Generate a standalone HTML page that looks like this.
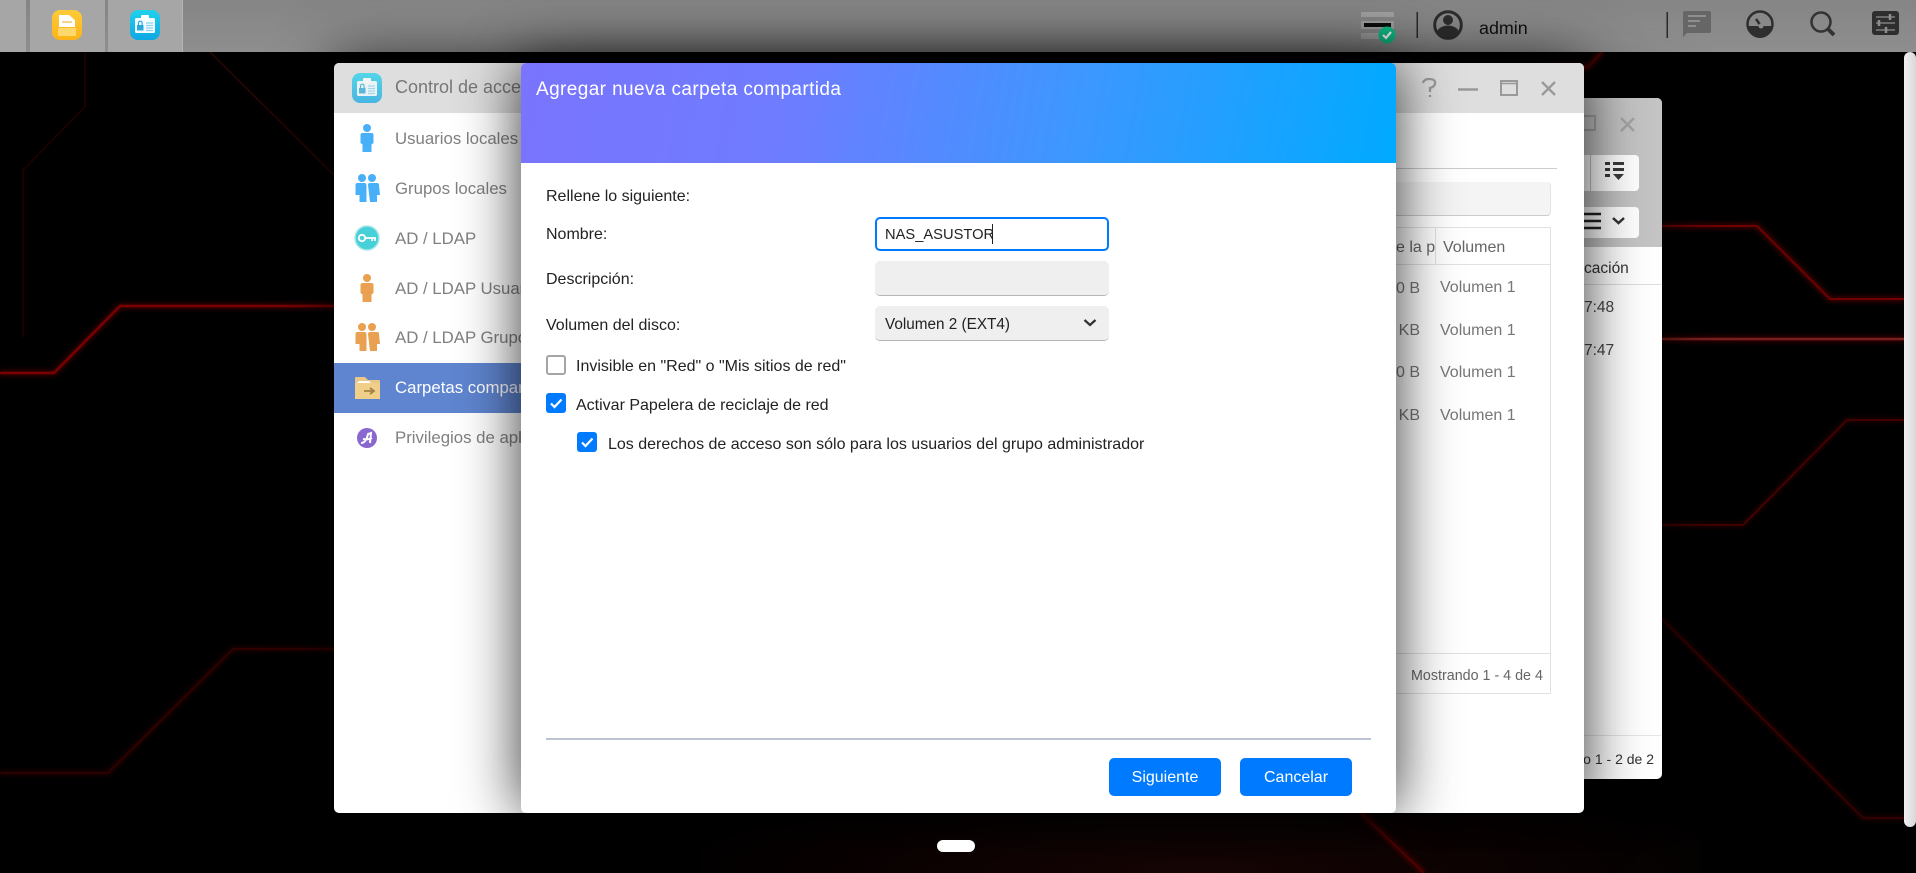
<!DOCTYPE html>
<html><head><meta charset="utf-8"><title>Agregar nueva carpeta compartida</title>
<style>
html,body{margin:0;padding:0;background:#000;width:1916px;height:873px;overflow:hidden}
body{position:relative;font-family:"Liberation Sans",sans-serif;font-size:16px;color:#222}
.a{position:absolute}
.t{position:absolute;white-space:nowrap;line-height:20px;margin-top:-10px}
.s{color:#808080;font-size:16.8px;left:395px}
.win{position:absolute;background:#fff;box-shadow:0 0 60px rgba(0,0,0,.8);overflow:hidden}
.chk{position:absolute;width:20px;height:20px;background:#007bff;border-radius:3px}
.btn{position:absolute;top:758px;height:38px;width:112px;background:#007bff;border-radius:5px;color:#fff;text-align:center;line-height:40px;font-size:16px}
.field{position:absolute;left:875px;width:234px;height:35px;background:#efefef;border-radius:5px;box-sizing:border-box;border-bottom:1px solid #b5b5b5}
.row{font-size:16px;color:#777}
</style></head><body>
<svg class="a" style="left:0;top:0" width="1916" height="873" viewBox="0 0 1916 873">
<defs>
<filter id="g" x="-20%" y="-20%" width="140%" height="140%"><feGaussianBlur stdDeviation="2.500"/></filter>
<radialGradient id="rg" cx="50%" cy="100%" r="60%"><stop offset="0" stop-color="#180606"/><stop offset="1" stop-color="#000"/></radialGradient>
<linearGradient id="acl" x1="0" y1="0" x2="0" y2="1"><stop offset="0" stop-color="#20d2ec"/><stop offset="1" stop-color="#0fa6e4"/></linearGradient>
<g id="aclicon"><rect x="0" y="0" width="30" height="30" rx="8" fill="url(#acl)"/><rect x="5" y="8" width="20" height="15" rx="1.5" fill="#fff" opacity=".95"/><rect x="11" y="5" width="8" height="5" rx="1" fill="#fff"/><rect x="7" y="15" width="6.5" height="5.5" fill="#2aa8dc"/><path d="M8.500 15v-2a1.800 1.800 0 0 1 3.600 0v2" fill="none" stroke="#2aa8dc" stroke-width="1.200"/><path d="M16 13h7M16 15.500h7M16 18h7M16 20.500h7" stroke="#8fd3ee" stroke-width="1.300"/></g>
</defs>
<rect x="700" y="700" width="1000" height="173" fill="url(#rg)"/>
<g fill="none" stroke-linejoin="miter">
<g stroke="#7a0000" stroke-width="6" filter="url(#g)" opacity=".45">
<path d="M0 373H54L120 306H340"/><path d="M1662 226H1757L1830 299H1904"/><path d="M1541 67H1588L1602 52"/><path d="M1662 339H1904"/><path d="M1361 813L1424 873"/>
</g>
<g stroke="#5a0000" stroke-width="5" filter="url(#g)" opacity=".35">
<path d="M0 773H108L233 649H340"/><path d="M1662 525H1743L1847 420H1904"/><path d="M1662 619L1863 818H1904"/>
</g>
<path d="M0 373H54L120 306H340" stroke="#7a0000" stroke-width="2.500"/>
<path d="M1662 226H1757L1830 299H1904" stroke="#700000" stroke-width="2"/>
<path d="M1541 67H1588L1602 52" stroke="#500000" stroke-width="1.500"/>
<path d="M1662 339H1904" stroke="#782020" stroke-width="2.500"/>
<path d="M1662 525H1743L1847 420H1904" stroke="#500000" stroke-width="1.500"/>
<path d="M1662 619L1863 818H1904" stroke="#3c0000" stroke-width="1.500"/>
<path d="M0 773H108L233 649H340" stroke="#360000" stroke-width="1.500"/>
<path d="M1361 813L1424 873" stroke="#600000" stroke-width="1.500"/>
<path d="M85 52V107L23 170V337" stroke="#220000" stroke-width="1.500"/>
<path d="M210 52L334 175" stroke="#2c0600" stroke-width="1.500"/>
</g>
</svg>

<!-- Top bar -->
<div class="a" style="left:0;top:0;width:1916px;height:52px;background:linear-gradient(#858585,#8e8e8e)"></div>
<div class="a" style="left:0;top:0;width:26px;height:52px;background:#a6a6a6"></div>
<div class="a" style="left:30px;top:0;width:75px;height:52px;background:#a6a6a6"></div>
<div class="a" style="left:107.500px;top:0;width:74.500px;height:52px;background:#a6a6a6;border-right:1px solid #b4b4b4"></div>
<svg class="a" style="left:0;top:0" width="1916" height="52" viewBox="0 0 1916 52">
<defs><linearGradient id="fs" x1="0" y1="0" x2="0" y2="1"><stop offset="0" stop-color="#ffcb3a"/><stop offset="1" stop-color="#fbb416"/></linearGradient></defs>
<rect x="52" y="10" width="30" height="30" rx="8" fill="url(#fs)"/>
<path d="M59 15h10l6 5v7H59z" fill="#fff"/><path d="M62 22h10" stroke="#f3c766" stroke-width="1.500"/>
<rect x="58" y="28" width="18" height="8" fill="#ffd86c"/>
<use href="#aclicon" x="130" y="10"/>
<!-- storage -->
<rect x="1361" y="12" width="33" height="5" fill="#a3a3a3"/><rect x="1361" y="21" width="33" height="8" fill="#a3a3a3"/><rect x="1364" y="23" width="27" height="4" fill="#0d0d0d"/><rect x="1361" y="33" width="33" height="6" fill="#a3a3a3"/>
<circle cx="1387" cy="35" r="8.500" fill="#10c08a"/><path d="M1383 35l3 3 5-6" fill="none" stroke="#fff" stroke-width="2.200"/>
<rect x="1416.500" y="12" width="1.500" height="26" fill="#2a2a2a"/>
<!-- avatar -->
<circle cx="1448" cy="25" r="13.300" fill="#8a8a8a" stroke="#2e2e2e" stroke-width="3"/><circle cx="1448" cy="20" r="5" fill="#2e2e2e"/><path d="M1437 33a11 7.500 0 0 1 22 0a13 13 0 0 1-22 0z" fill="#2e2e2e"/>
<rect x="1666.500" y="12" width="1.500" height="26" fill="#2a2a2a"/>
<!-- chat -->
<path d="M1685 11h24a2 2 0 0 1 2 2v18a2 2 0 0 1-2 2h-22l-4 4V13a2 2 0 0 1 2-2z" fill="#666"/><path d="M1688 16h18M1688 21h12M1688 26h8" stroke="#8f8f8f" stroke-width="2"/>
<!-- gauge -->
<circle cx="1760" cy="24" r="12.500" fill="none" stroke="#2e2e2e" stroke-width="2.500"/><path d="M1748 26h24a12 12 0 0 1-24 0z" fill="#2e2e2e"/><path d="M1756 19l5 7" stroke="#2e2e2e" stroke-width="2.500"/><circle cx="1761" cy="26" r="2.500" fill="#8a8a8a"/>
<!-- search -->
<circle cx="1821" cy="22" r="9.500" fill="none" stroke="#333" stroke-width="2.500"/><path d="M1828 29l6 6" stroke="#333" stroke-width="4"/>
<!-- settings -->
<rect x="1872" y="11" width="27" height="24" rx="3" fill="#2e2e2e"/><path d="M1876 17h19M1876 23h19M1876 30h19" stroke="#8f8f8f" stroke-width="1.300"/><path d="M1890 14v6M1879 20v6M1886 27v6" stroke="#8f8f8f" stroke-width="2.500"/>
</svg>
<div class="t" style="left:1479px;top:28px;font-size:17.900px;color:#111">admin</div>

<!-- Back window -->
<div class="win" style="left:1400px;top:98px;width:261.500px;height:680.500px;border-radius:5px">
<div class="a" style="left:0;top:0;right:0;height:149px;background:#c4c4c4"></div>
</div>
<div class="a" style="left:1584px;top:155px;width:55px;height:36px;background:#fff;border-radius:0 4px 4px 0"></div>
<div class="a" style="left:1590px;top:155px;width:1px;height:36px;background:#c4c4c4"></div>
<div class="a" style="left:1584px;top:207px;width:55px;height:31px;background:#fff;border-radius:0 4px 4px 0"></div>
<svg class="a" style="left:1584px;top:98px" width="78" height="150" viewBox="0 0 78 150">
<rect x="-6" y="18" width="17" height="14" fill="none" stroke="#a3a3a3" stroke-width="2"/>
<path d="M37 20l13 13M50 20L37 33" stroke="#a3a3a3" stroke-width="2.500"/>
<path d="M21 64h5v3h-5zM29 64h11v3H29zM21 70h5v3h-5zM29 70h11v3H29zM21 76h5v3h-5z" fill="#3a3a3a"/><path d="M29 76h11l-5.500 6z" fill="#3a3a3a"/>
<path d="M0 116h17M0 123h17M0 130h17" stroke="#222" stroke-width="2.500"/>
<path d="M29 120l5.500 5 5.500-5" fill="none" stroke="#333" stroke-width="2.500"/>
</svg>
<div class="t" style="left:1584px;top:269px;font-size:15.500px;color:#333">cación</div>
<div class="a" style="left:1584px;top:284px;width:77px;height:1px;background:#ddd"></div>
<div class="t" style="left:1584px;top:308px;font-size:15.500px;color:#444">7:48</div>
<div class="t" style="left:1584px;top:351px;font-size:15.500px;color:#444">7:47</div>
<div class="a" style="left:1584px;top:735px;width:77px;height:1px;background:#e6e6e6"></div>
<div class="t" style="left:1584px;width:70px;text-align:right;top:759px;font-size:14px;color:#333;direction:rtl"><span style="direction:ltr;unicode-bidi:embed">o 1 - 2 de 2</span></div>

<!-- Main window -->
<div class="win" style="left:334px;top:63px;width:1250px;height:750px;border-radius:5px">
<div class="a" style="left:0;top:0;right:0;height:50px;background:#dedede"></div>
<div class="a" style="left:0;top:300px;width:300px;height:50px;background:#5f85d0"></div>
</div>
<svg class="a" style="left:352px;top:73px;opacity:.72" width="30" height="30" viewBox="0 0 30 30"><use href="#aclicon"/></svg>
<div class="t" style="left:395px;top:87px;font-size:18px;color:#777;width:130px;overflow:hidden">Control de acceso</div>
<div class="t s" style="top:139px">Usuarios locales</div>
<div class="t s" style="top:189px">Grupos locales</div>
<div class="t s" style="top:239px">AD / LDAP</div>
<div class="t s" style="top:289px">AD / LDAP Usuarios</div>
<div class="t s" style="top:338px">AD / LDAP Grupos</div>
<div class="t s" style="top:388px;color:#fff">Carpetas compartidas</div>
<div class="t s" style="top:438px">Privilegios de aplicación</div>
<svg class="a" style="left:340px;top:113px" width="60" height="340" viewBox="340 113 60 340">
<g fill="#48b0f8"><circle cx="367" cy="128" r="4"/><path d="M360.500 135q0-2 2-2h9q2 0 2 2v8l-2 1.500v7.500h-9v-7.500l-2-1.500z"/>
<circle cx="362" cy="178" r="4"/><circle cx="372" cy="178" r="4"/><path d="M355.500 185q0-2 2-2h8l1 2v17h-7v-7h-4z"/><path d="M368 185q0-2 2-2h7q2 0 2 2l1 10h-3v7h-7z"/></g>
<circle cx="367" cy="238" r="12" fill="#47d0d8" stroke="#a8e8ea" stroke-width="1.500"/>
<circle cx="362" cy="238" r="3.200" fill="none" stroke="#fff" stroke-width="1.800"/><path d="M365 238h11M372 238v3M375 238v3" stroke="#fff" stroke-width="1.800"/>
<g fill="#e9a050"><circle cx="367" cy="278" r="4"/><path d="M360.500 285q0-2 2-2h9q2 0 2 2v8l-2 1.500v7.500h-9v-7.500l-2-1.500z"/>
<circle cx="362" cy="327" r="4"/><circle cx="372" cy="327" r="4"/><path d="M355.500 334q0-2 2-2h8l1 2v17h-7v-7h-4z"/><path d="M368 334q0-2 2-2h7q2 0 2 2l1 10h-3v7h-7z"/></g>
<path d="M355 378a1 1 0 0 1 1-1h9l3 3h11a1 1 0 0 1 1 1v3h-25z" fill="#e8c888"/><path d="M355 383h25v16h-25z" fill="#f0d088"/><path d="M357 383l2-2h10l2 2z" fill="#fff"/><path d="M364 391h10M370 388l4 3-4 3" fill="none" stroke="#a88048" stroke-width="1.800"/>
<circle cx="367" cy="438" r="10" fill="#8868d0"/><path d="M361 443q5 0 7-9l3-1-1 10M363 439q5 1 9-1" fill="none" stroke="#fff" stroke-width="2"/>
</svg>
<svg class="a" style="left:1410px;top:70px" width="160" height="40" viewBox="1410 70 160 40">
<path d="M1423 83q1-4 6-4 7 0 6 5-1 3-5 4v4M1430 95v2" fill="none" stroke="#999" stroke-width="2.300"/>
<path d="M1458 89.500h20" stroke="#999" stroke-width="2.500"/>
<rect x="1501" y="81" width="16" height="14" fill="none" stroke="#999" stroke-width="2"/><path d="M1501 83.500h16" stroke="#999" stroke-width="1.500"/>
<path d="M1542 82l13 13M1555 82l-13 13" stroke="#999" stroke-width="2.300"/>
</svg>
<!-- Main content right -->
<div class="a" style="left:1300px;top:168px;width:257px;height:1px;background:#ccc"></div>
<div class="a" style="left:1300px;top:182px;width:251px;height:34px;background:#f4f4f4;border-radius:4px;box-sizing:border-box;border-bottom:1px solid #ccc;border-right:1px solid #e4e4e4"></div>
<div class="a" style="left:1300px;top:227px;width:251px;height:467px;box-sizing:border-box;border:1px solid #e2e2e2"></div>
<div class="a" style="left:1300px;top:264px;width:251px;height:1px;background:#e2e2e2"></div>
<div class="a" style="left:1300px;top:653px;width:251px;height:1px;background:#e2e2e2"></div>
<div class="a" style="left:1435px;top:227px;width:1px;height:37px;background:#e2e2e2"></div>
<div class="t" style="left:1396px;top:248px;width:39px;overflow:hidden;font-size:16px;color:#666">e la pa</div>
<div class="t" style="left:1443px;top:248px;font-size:16px;color:#666">Volumen</div>
<div class="t row" style="left:1320px;top:289px;width:100px;text-align:right">00 B</div><div class="t row" style="left:1440px;top:288px">Volumen 1</div>
<div class="t row" style="left:1320px;top:331px;width:100px;text-align:right">0 KB</div><div class="t row" style="left:1440px;top:331px">Volumen 1</div>
<div class="t row" style="left:1320px;top:373px;width:100px;text-align:right">00 B</div><div class="t row" style="left:1440px;top:373px">Volumen 1</div>
<div class="t row" style="left:1320px;top:416px;width:100px;text-align:right">0 KB</div><div class="t row" style="left:1440px;top:416px">Volumen 1</div>
<div class="t" style="left:1411px;top:676px;font-size:14.300px;color:#666">Mostrando 1 - 4 de 4</div>

<!-- Modal -->
<div class="win" style="left:521px;top:63px;width:875px;height:750px;border-radius:5px">
<div class="a" style="left:0;top:0;right:0;height:100px;background:linear-gradient(100deg,#7a74ff 0%,#6f7cff 30%,#3a98ff 65%,#00aaff 100%)"></div>
</div>
<div class="t" style="left:536px;top:90px;font-size:19px;letter-spacing:.4px;color:#fff">Agregar nueva carpeta compartida</div>
<div class="t" style="left:546px;top:197px">Rellene lo siguiente:</div>
<div class="t" style="left:546px;top:235px">Nombre:</div>
<div class="t" style="left:546px;top:280px">Descripción:</div>
<div class="t" style="left:546px;top:326px">Volumen del disco:</div>
<div class="a" style="left:875px;top:216.500px;width:234px;height:34px;box-sizing:border-box;border:2px solid #007bff;border-radius:5px;background:#fff"></div>
<div class="t" style="left:885px;top:235px;font-size:14.700px">NAS_ASUSTOR</div>
<div class="a" style="left:992px;top:224px;width:1px;height:20px;background:#222"></div>
<div class="field" style="top:261px"></div>
<div class="field" style="top:306px"></div>
<div class="t" style="left:885px;top:325px;font-size:15.300px">Volumen 2 (EXT4)</div>
<svg class="a" style="left:1082px;top:317px" width="16" height="12" viewBox="0 0 16 12"><path d="M2.500 3l5.500 5 5.500-5" fill="none" stroke="#333" stroke-width="2.300"/></svg>
<div class="a" style="left:546px;top:355px;width:20px;height:20px;box-sizing:border-box;border:2px solid #a5a5a5;border-radius:3px;background:#fff"></div>
<div class="t" style="left:576px;top:367px">Invisible en "Red" o "Mis sitios de red"</div>
<div class="chk" style="left:546px;top:393px"><svg width="20" height="20" viewBox="0 0 20 20"><path d="M5 10.500l3.500 3.500 7-7.500" fill="none" stroke="#fff" stroke-width="2.200"/></svg></div>
<div class="t" style="left:576px;top:406px">Activar Papelera de reciclaje de red</div>
<div class="chk" style="left:577px;top:432px"><svg width="20" height="20" viewBox="0 0 20 20"><path d="M5 10.500l3.500 3.500 7-7.500" fill="none" stroke="#fff" stroke-width="2.200"/></svg></div>
<div class="t" style="left:608px;top:445px">Los derechos de acceso son sólo para los usuarios del grupo administrador</div>
<div class="a" style="left:546px;top:738px;width:825px;height:1.500px;background:#bcc3d2"></div>
<div class="btn" style="left:1109px">Siguiente</div>
<div class="btn" style="left:1240px">Cancelar</div>

<div class="a" style="left:937px;top:840px;width:38px;height:12px;background:#fff;border-radius:6px"></div>
<div class="a" style="left:1904px;top:52px;width:12px;height:775px;background:linear-gradient(90deg,#f0f0f0,#d8d8d8);border-radius:6px"></div>
</body></html>
